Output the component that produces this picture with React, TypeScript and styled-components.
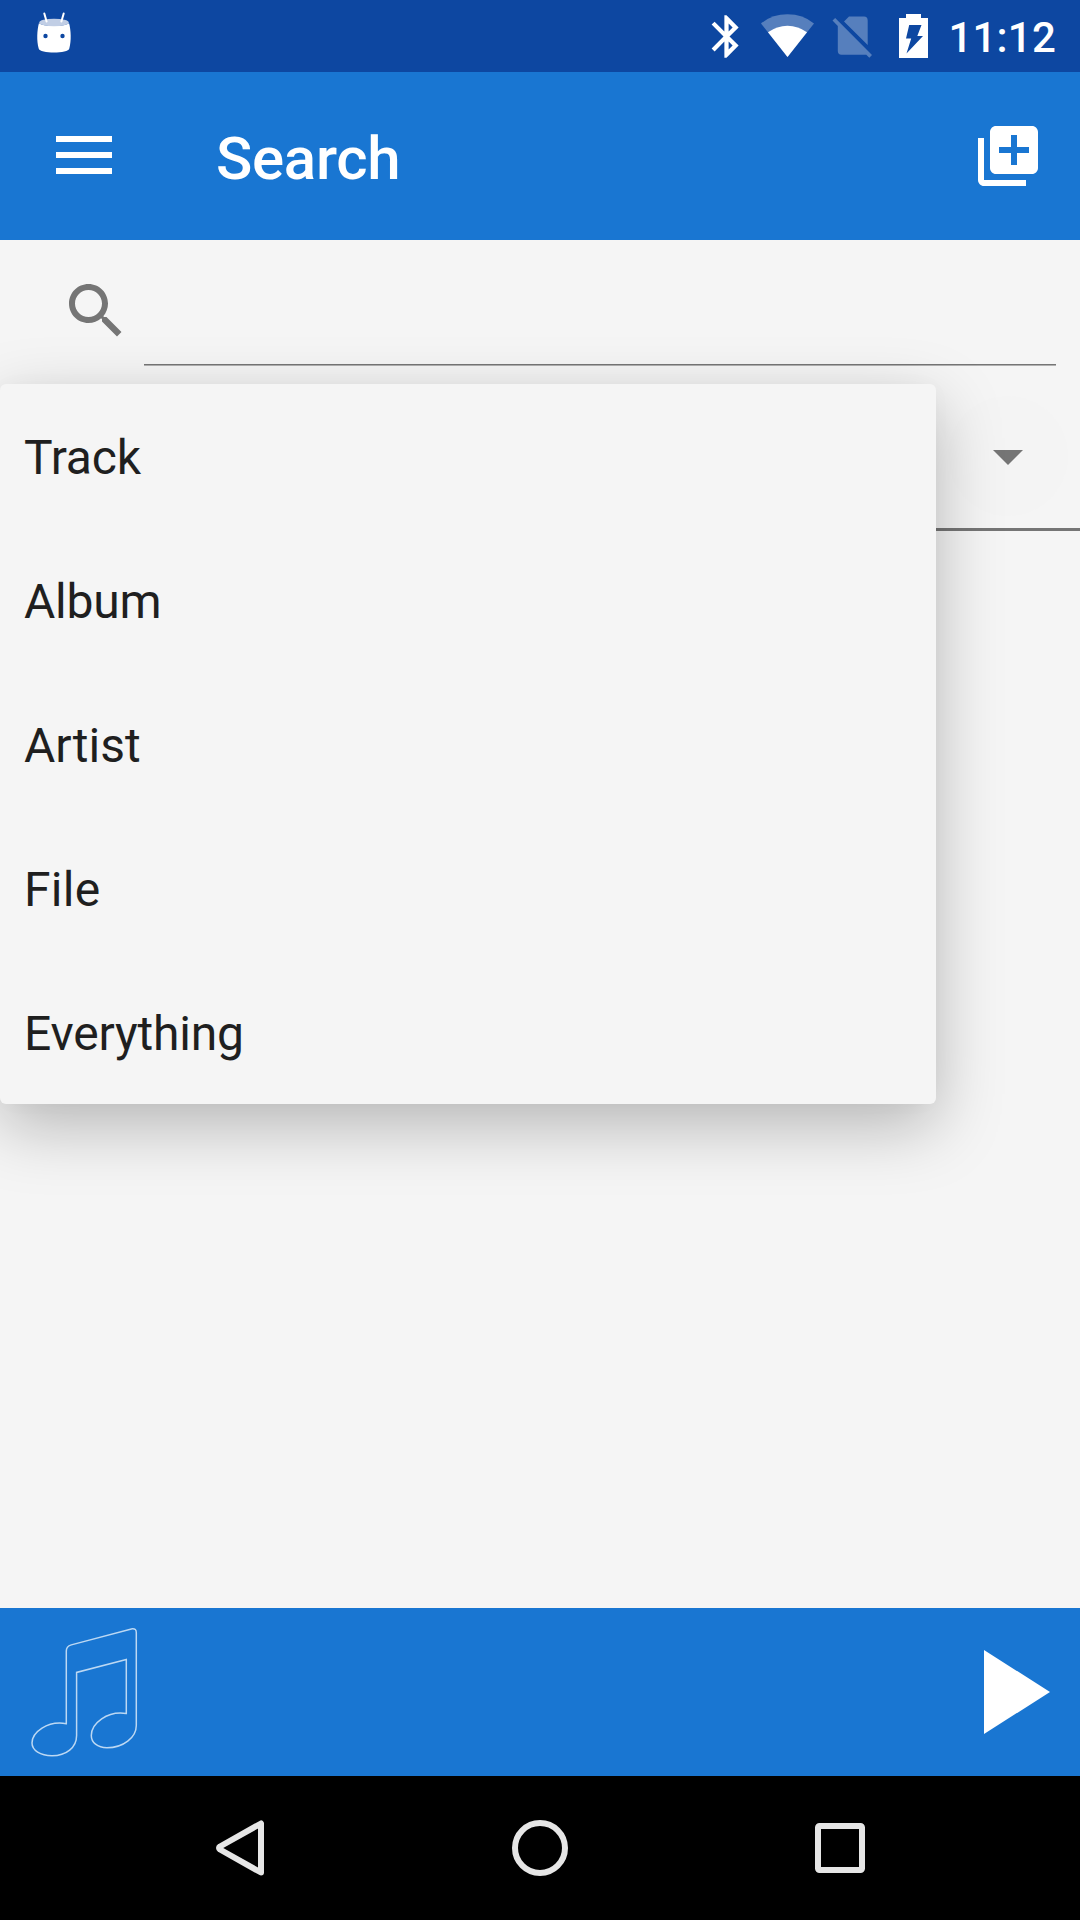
import React from "react";
import styled, { createGlobalStyle } from "styled-components";

const GlobalStyle = createGlobalStyle`
  * { box-sizing: border-box; }
  body { margin: 0; background: #f5f5f5; }
  svg { display: block; flex: none; }
`;

const Screen = styled.div`
  width: 1080px;
  height: 1920px;
  display: flex;
  flex-direction: column;
  background: #f5f5f5;
  font-family: Roboto, "Noto Sans", sans-serif;
  overflow: hidden;
`;

const StatusBar = styled.header`
  height: 72px;
  display: flex;
  align-items: center;
  justify-content: space-between;
  padding: 0 24px 0 34px;
  background: #0d47a1;
`;

const StatusIcons = styled.div`
  display: flex;
  align-items: center;
  height: 72px;
`;

const Clock = styled.time`
  width: 110px;
  padding-top: 4px;
  text-align: right;
  font-size: 42px;
  line-height: 70px;
  font-weight: 500;
  letter-spacing: 0.2px;
  white-space: nowrap;
  color: #fff;
`;

const Toolbar = styled.div`
  height: 168px;
  display: flex;
  align-items: center;
  padding: 0 36px 0 48px;
  background: #1976d2;
`;

const IconButton = styled.button`
  display: flex;
  padding: 0;
  border: 0;
  background: none;
`;

const Title = styled.h1`
  flex: 1;
  margin: 0 0 0 96px;
  padding-top: 6px;
  font-size: 60px;
  line-height: 72px;
  font-weight: 500;
  letter-spacing: -0.3px;
  color: #fff;
`;

const Content = styled.main`
  position: relative;
  flex: 1;
  display: flex;
  flex-direction: column;
`;

const SearchRow = styled.label`
  height: 144px;
  display: flex;
  align-items: center;
  padding: 0 24px 0 60px;
`;

const SearchIcon = styled.svg`
  margin-bottom: 2px;
`;

const SearchInput = styled.input`
  flex: 1;
  height: 111px;
  margin: 14px 0 0 12px;
  padding: 0;
  align-self: flex-start;
  border: 0;
  border-bottom: 1px solid #757575;
  border-radius: 0;
  box-shadow: 0 1px 0 #b0b0b0;
  background: none;
  font: 400 48px Roboto, sans-serif;
  outline: none;
`;

const Spinner = styled.div`
  position: relative;
  height: 147px;
  display: flex;
  align-items: center;
  justify-content: flex-end;
  padding-right: 57px;
  border-bottom: 3px solid #757575;
`;

const Ripple = styled.span`
  position: absolute;
  right: 12px;
  top: 12px;
  width: 120px;
  height: 120px;
  border-radius: 50%;
  background: #f4f4f4;
`;

const Arrow = styled.svg`
  position: relative;
  margin-top: 3px;
`;

const Menu = styled.ul`
  position: absolute;
  left: 0;
  top: 144px;
  width: 936px;
  margin: 0;
  padding: 0;
  list-style: none;
  border-radius: 6px;
  background: #f5f5f5;
  box-shadow: 0 22px 66px rgba(0, 0, 0, 0.26), 0 0 24px rgba(0, 0, 0, 0.02);
`;

const MenuItem = styled.li<{ $tracking: number }>`
  height: 144px;
  padding: 2px 24px 0;
  font-size: 48px;
  line-height: 144px;
  letter-spacing: ${(p) => p.$tracking}px;
  color: #1f1f1f;
`;

const PlayerBar = styled.section`
  height: 168px;
  display: flex;
  align-items: center;
  justify-content: space-between;
  padding-right: 30px;
  background: #1976d2;
`;

const NavBar = styled.nav`
  height: 144px;
  display: flex;
  align-items: center;
  justify-content: center;
  gap: 228px;
  background: #000;
`;

const options = [
  { label: "Track", tracking: -0.2 },
  { label: "Album", tracking: -0.2 },
  { label: "Artist", tracking: 0 },
  { label: "File", tracking: 0.25 },
  { label: "Everything", tracking: -0.2 },
];

export default function App() {
  return (
    <Screen>
      <GlobalStyle />
      <StatusBar>
        <svg width="40" height="72" viewBox="34 0 40 72">
          <path d="M39 23C42 27 66 27 69 23C71 30 71.500 41 69.300 48.500C68.500 53.900 39.500 53.900 38.700 48.500C36.500 41 37 30 39 23Z" fill="#fff" />
          <ellipse cx="54" cy="22.500" rx="14.800" ry="3.800" fill="#c1cee5" />
          <path d="M44.300 13.500L46.600 21.500M63.700 13.500L61.400 21.500" stroke="#fff" strokeWidth="2" strokeLinecap="round" />
          <circle cx="45.500" cy="36" r="2.200" fill="#0d47a1" />
          <circle cx="62.500" cy="36" r="2.200" fill="#0d47a1" />
        </svg>
        <StatusIcons>
          <svg width="246" height="72" viewBox="700 0 246 72">
            <path
              transform="translate(701 11) scale(2.125)"
              fill="#fff"
              d="M17.710 7.710L12 2h-1v7.590L6.410 5 5 6.410 10.590 12 5 17.590 6.410 19 11 14.410V22h1l5.710-5.710-4.300-4.290 4.300-4.290zM13 5.830l1.880 1.880L13 9.590V5.830zm1.880 10.460L13 18.170v-3.760l1.880 1.880z"
            />
            <path d="M761 23.500Q772 14.300 787.500 14.300T814 23.500L787.500 57Z" fill="#567fbd" />
            <path d="M768 32.200Q777 25.700 787.500 25.700T807 32.200L787.500 57Z" fill="#fff" />
            <path d="M849 16.500H864Q867.700 16.500 867.700 20.500V45L844 21.500ZM832.500 20.500L835.200 18L872 55L869.300 57.700L866.300 54.700H841.500Q837.800 54.700 837.800 51V26Z" fill="#567fbd" />
            <path
              fill="#fff"
              fillRule="evenodd"
              d="M906 14H921V18H928V58H899V18H906ZM909.200 25L906 38.500H911.200L906.500 53.500L923 36H917.300L921.500 25Z"
            />
          </svg>
          <Clock>11:12</Clock>
        </StatusIcons>
      </StatusBar>

      <Toolbar>
        <IconButton aria-label="Menu">
          <svg width="72" height="72">
            <path d="M8 16h56v6H8zM8 32h56v6H8zM8 48h56v6H8z" fill="#fff" />
          </svg>
        </IconButton>
        <Title>Search</Title>
        <IconButton aria-label="Add to queue">
          <svg width="72" height="72" viewBox="0 0 24 24" fill="#fff">
            <path d="M4 6H2v14c0 1.100.9 2 2 2h14v-2H4V6zm16-4H8c-1.100 0-2 .9-2 2v12c0 1.100.9 2 2 2h12c1.100 0 2-.9 2-2V4c0-1.100-.9-2-2-2zm-1 9h-4v4h-2v-4H9V9h4V5h2v4h4v2z" />
          </svg>
        </IconButton>
      </Toolbar>

      <Content>
        <SearchRow>
          <SearchIcon width="72" height="72" viewBox="0 0 24 24" fill="#757575">
            <path d="M15.500 14h-.79l-.28-.27C15.410 12.590 16 11.110 16 9.500 16 5.910 13.090 3 9.500 3S3 5.910 3 9.500 5.910 16 9.500 16c1.610 0 3.090-.59 4.230-1.570l.27.28v.79l5 4.990L20.490 19l-4.990-5zm-6 0C7.010 14 5 11.990 5 9.500S7.010 5 9.500 5 14 7.010 14 9.500 11.990 14 9.500 14z" />
          </SearchIcon>
          <SearchInput />
        </SearchRow>
        <Spinner>
          <Ripple />
          <Arrow width="30" height="15">
            <path d="M0 0H30L15 15Z" fill="#757575" />
          </Arrow>
        </Spinner>
        <Menu>
          {options.map(({ label, tracking }) => (
            <MenuItem key={label} $tracking={tracking}>
              {label}
            </MenuItem>
          ))}
        </Menu>
      </Content>

      <PlayerBar>
        <svg width="168" height="168" fill="none">
          <path
            transform="translate(0.3 0.4)"
            d="M66 115.300V42.700Q66 38 71 36.500L132 20.300Q136 20 136 24V117C136 129 123 139.300 106.700 139.300C97 139.300 91 134 91 127C91 115 107 102 126 105V51L76.300 64V127C76.300 139 66 147.300 51.700 147.300C40 147.300 31.700 142 31.700 134.700C31.700 124 47 112 66 115.300Z"
            stroke="#bcd8f3"
            strokeWidth="1.500"
          />
        </svg>
        <IconButton aria-label="Play">
          <svg width="66" height="84">
            <path d="M0 0L66 42L0 84Z" fill="#fff" />
          </svg>
        </IconButton>
      </PlayerBar>

      <NavBar>
        <svg width="72" height="72" viewBox="204 1812 72 72" fill="none" stroke="#e6e6e6" strokeWidth="6" strokeLinejoin="round">
          <path d="M261 1823.500V1872.500L220 1849.500Q218 1848 220 1846.500Z" />
        </svg>
        <svg width="72" height="72" fill="none" stroke="#e6e6e6" strokeWidth="6">
          <circle cx="36" cy="36" r="25" />
        </svg>
        <svg width="72" height="72" fill="none" stroke="#e6e6e6" strokeWidth="6">
          <rect x="14" y="14" width="44" height="44" rx="1.500" />
        </svg>
      </NavBar>
    </Screen>
  );
}
